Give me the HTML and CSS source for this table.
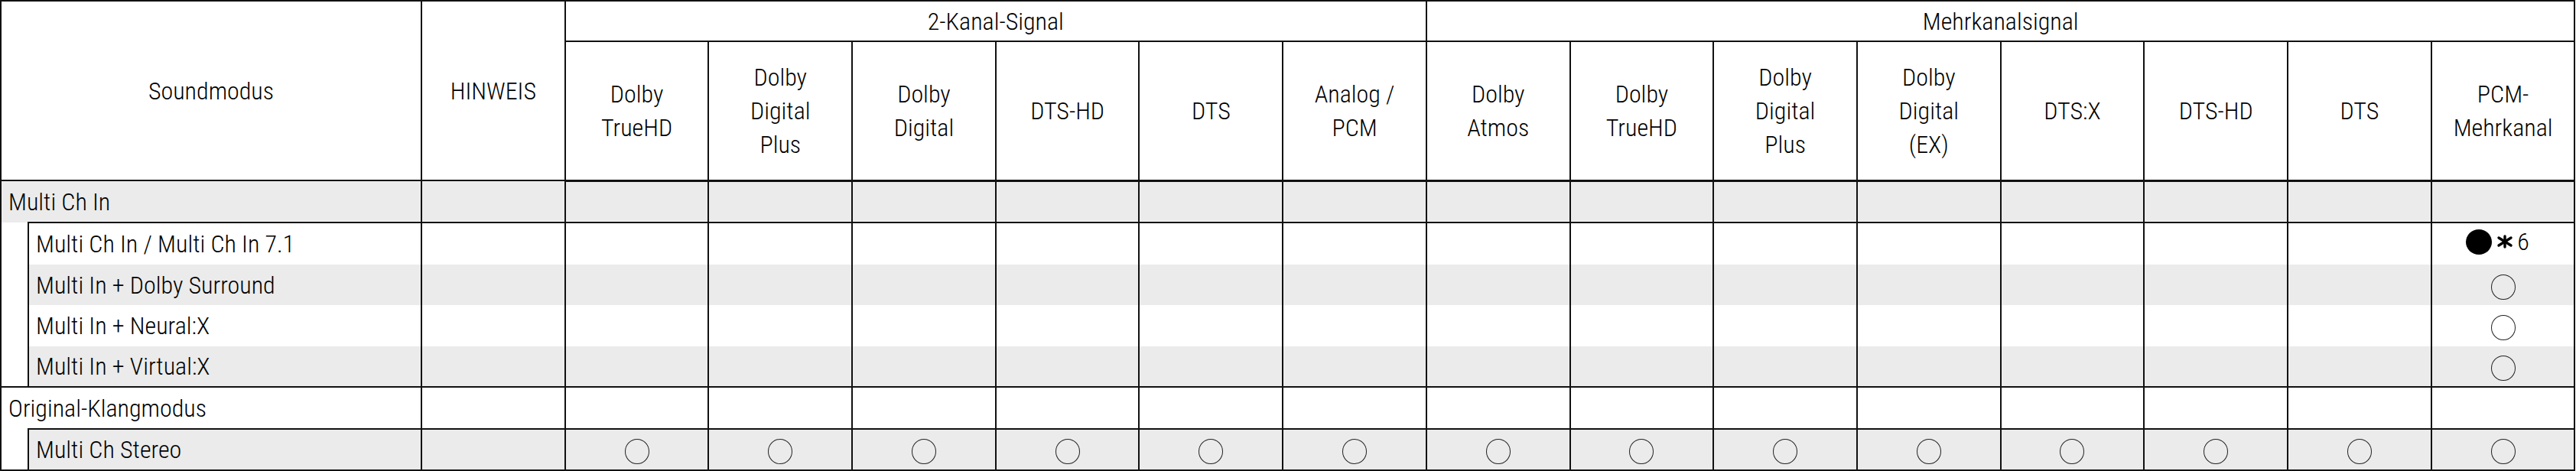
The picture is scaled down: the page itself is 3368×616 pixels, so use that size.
FILE: index.html
```html
<!DOCTYPE html>
<html lang="de">
<head>
<meta charset="utf-8">
<title>Soundmodus</title>
<link rel="stylesheet" href="styles.css">
</head>
<body>
<table class="modes">
  <colgroup>
    <col class="c-indent">
    <col class="c-label">
    <col class="c-data"><col class="c-data"><col class="c-data"><col class="c-data"><col class="c-data">
    <col class="c-data"><col class="c-data"><col class="c-data"><col class="c-data"><col class="c-data">
    <col class="c-data"><col class="c-data"><col class="c-data"><col class="c-data"><col class="c-data">
  </colgroup>
  <thead>
    <tr class="h1">
      <th colspan="2" rowspan="2">Soundmodus</th>
      <th rowspan="2">HINWEIS</th>
      <th colspan="6">2-Kanal-Signal</th>
      <th colspan="8">Mehrkanalsignal</th>
    </tr>
    <tr class="h2">
      <th>Dolby<br>TrueHD</th>
      <th>Dolby<br>Digital<br>Plus</th>
      <th>Dolby<br>Digital</th>
      <th>DTS-HD</th>
      <th>DTS</th>
      <th>Analog /<br>PCM</th>
      <th>Dolby<br>Atmos</th>
      <th>Dolby<br>TrueHD</th>
      <th>Dolby<br>Digital<br>Plus</th>
      <th>Dolby<br>Digital<br>(EX)</th>
      <th>DTS:X</th>
      <th>DTS-HD</th>
      <th>DTS</th>
      <th>PCM-<br>Mehrkanal</th>
    </tr>
  </thead>
  <tbody>
    <tr class="r1 gray parent">
      <td colspan="2" class="label">Multi Ch In</td>
      <td></td><td></td><td></td><td></td><td></td><td></td><td></td><td></td><td></td><td></td><td></td><td></td><td></td><td></td><td></td>
    </tr>
    <tr class="r2 white first-sub">
      <td rowspan="4" class="indent gray"></td>
      <td class="label sub">Multi Ch In / Multi Ch In 7.1</td>
      <td></td><td></td><td></td><td></td><td></td><td></td><td></td><td></td><td></td><td></td><td></td><td></td><td></td><td></td>
      <td><span class="mark"><span class="dot"></span><svg class="star" viewBox="0 0 22 18" width="22" height="18" aria-label="*"><g stroke="#000" stroke-width="3.4" stroke-linecap="round"><line x1="11" y1="2" x2="11" y2="16"/><line x1="3" y1="4" x2="19" y2="14"/><line x1="3" y1="14" x2="19" y2="4"/></g></svg><span class="note">6</span></span></td>
    </tr>
    <tr class="r3 gray cont">
      <td class="label sub">Multi In + Dolby Surround</td>
      <td></td><td></td><td></td><td></td><td></td><td></td><td></td><td></td><td></td><td></td><td></td><td></td><td></td><td></td>
      <td><span class="ring"></span></td>
    </tr>
    <tr class="r4 white cont">
      <td class="label sub">Multi In + Neural:X</td>
      <td></td><td></td><td></td><td></td><td></td><td></td><td></td><td></td><td></td><td></td><td></td><td></td><td></td><td></td>
      <td><span class="ring"></span></td>
    </tr>
    <tr class="r5 gray cont">
      <td class="label sub">Multi In + Virtual:X</td>
      <td></td><td></td><td></td><td></td><td></td><td></td><td></td><td></td><td></td><td></td><td></td><td></td><td></td><td></td>
      <td><span class="ring"></span></td>
    </tr>
    <tr class="r6 white parent">
      <td colspan="2" class="label">Original-Klangmodus</td>
      <td></td><td></td><td></td><td></td><td></td><td></td><td></td><td></td><td></td><td></td><td></td><td></td><td></td><td></td><td></td>
    </tr>
    <tr class="r7 gray first-sub">
      <td class="indent white"></td>
      <td class="label sub">Multi Ch Stereo</td>
      <td></td>
      <td><span class="ring"></span></td><td><span class="ring"></span></td><td><span class="ring"></span></td>
      <td><span class="ring"></span></td><td><span class="ring"></span></td><td><span class="ring"></span></td>
      <td><span class="ring"></span></td><td><span class="ring"></span></td><td><span class="ring"></span></td>
      <td><span class="ring"></span></td><td><span class="ring"></span></td><td><span class="ring"></span></td>
      <td><span class="ring"></span></td><td><span class="ring"></span></td>
    </tr>
  </tbody>
</table>
</body>
</html>
```

FILE: styles.css
```css
html, body {
  margin: 0;
  padding: 0;
  background: #ffffff;
}

.modes {
  border-collapse: collapse;
  table-layout: fixed;
  width: 3366px;
  font-family: "Roboto Condensed", "Liberation Sans", sans-serif;
  font-size: 32px;
  font-weight: 300;
  color: #000;
  line-height: 44px;
}

.c-indent { width: 36px; }
.c-label { width: 514px; }
.c-data { width: 187.7px; }

.modes th,
.modes td {
  border: 2px solid #111;
  padding: 0;
  text-align: center;
  vertical-align: middle;
  font-weight: 300;
}

.modes thead tr.h1 { height: 53px; }
.modes thead tr.h2 { height: 182px; }
.modes thead tr.h2 th { border-bottom-width: 3px; }

.r1 { height: 55px; }
.r2 { height: 55px; }
.r3 { height: 53px; }
.r4 { height: 54px; }
.r5 { height: 53px; }
.r6 { height: 55px; }
.r7 { height: 54px; }

tr.gray td,
td.gray { background: #ebebeb; }
tr.white td,
td.white { background: #ffffff; }
tr.gray td.indent.white { background: #ffffff; }

.modes td.label {
  text-align: left;
  padding-left: 9px;
  white-space: nowrap;
}

.modes td.indent { border-top-style: hidden; }

tr.cont td { border-top-style: hidden; }

.ring {
  display: inline-block;
  box-sizing: border-box;
  width: 32px;
  height: 33px;
  border: 1.4px solid #222;
  border-radius: 50%;
  vertical-align: middle;
}

.mark {
  display: inline-flex;
  align-items: center;
  margin-left: -14px;
}

.dot {
  display: inline-block;
  width: 34px;
  height: 33px;
  border-radius: 50%;
  background: #000;
}

.star {
  display: block;
  margin-left: 6px;
}

.note {
  margin-left: 5px;
}
```
